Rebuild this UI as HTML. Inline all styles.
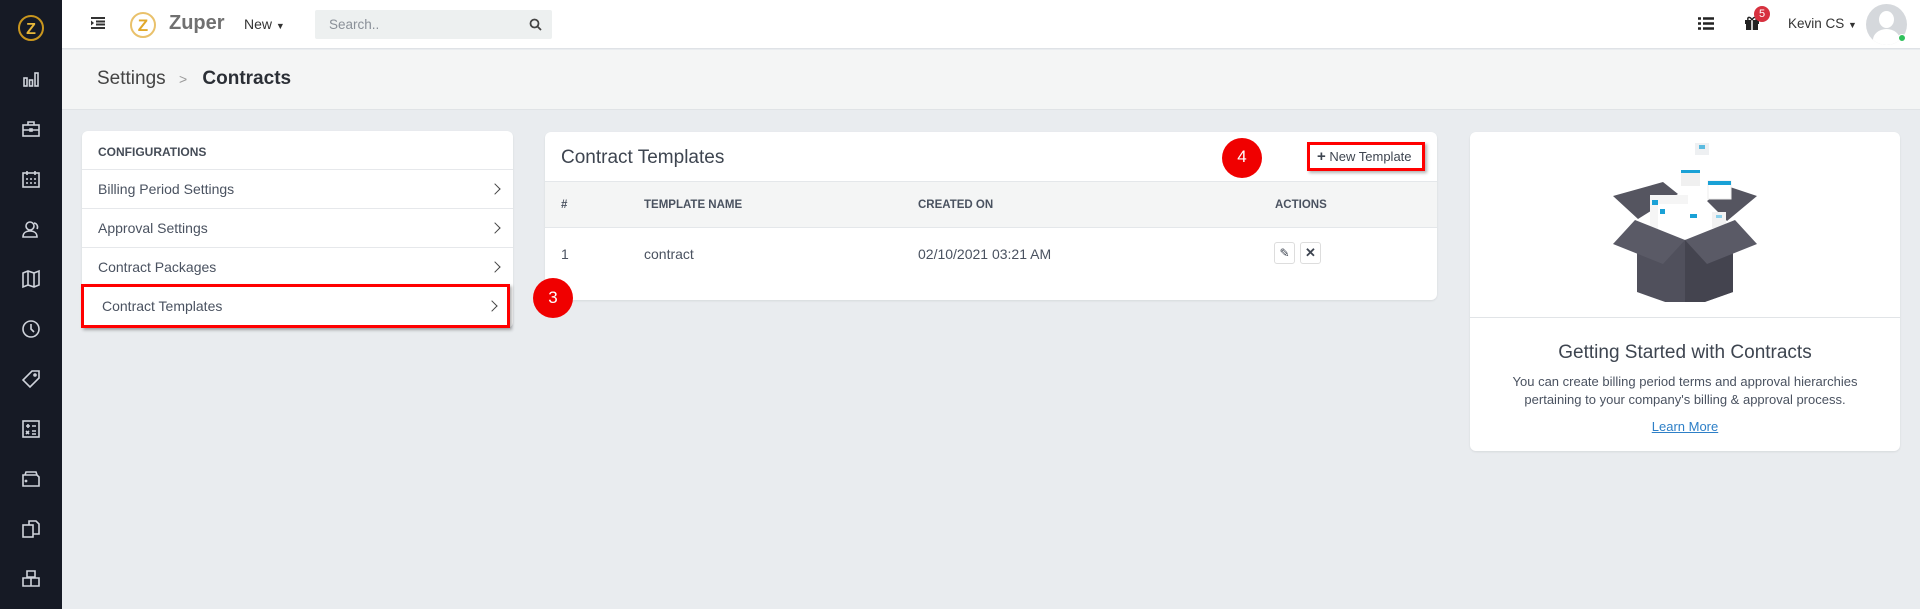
<!DOCTYPE html>
<html><head><meta charset="utf-8"><style>
*{box-sizing:border-box;margin:0;padding:0}
body{width:1920px;height:609px;overflow:hidden;background:#e9ecef;font-family:"Liberation Sans",sans-serif;color:#3d4450;position:relative}
.abs{position:absolute}
#side{left:0;top:0;width:62px;height:609px;background:#161a25}
#side svg{position:absolute;left:21px;width:20px;height:20px;fill:none;stroke:#cfd3db;stroke-width:1.6}
#top{left:62px;top:0;width:1858px;height:49px;background:#fff;border-bottom:1px solid #dfe2e6}
#crumb{left:62px;top:50px;width:1858px;height:60px;background:#f4f5f5;border-bottom:1px solid #e0e3e6}
.card{background:#fff;border-radius:6px;box-shadow:0 1px 2px rgba(0,0,0,.08)}
.row{position:absolute;left:0;width:100%;border-top:1px solid #e6e8eb;font-size:14px;color:#4a5260;padding-left:16px}
.chev{position:absolute;right:14px;top:50%;width:8px;height:8px;border-right:1.6px solid #444;border-top:1.6px solid #444;transform:translateY(-50%) rotate(45deg)}
.th{position:absolute;top:17px;font-size:11.5px;color:#4a5260;font-weight:bold}
.td{position:absolute;top:18px;font-size:14px;color:#4a5260}
.red{background:#f00000;border-radius:50%;color:#fff;font-size:17px;text-align:center}
</style></head><body>
<div id="side" class="abs">
 <svg style="top:13px;left:16px;width:30px;height:30px" viewBox="0 0 30 30"><circle cx="15" cy="15" r="12" stroke="#c9961e" stroke-width="2"/><text x="15" y="21" text-anchor="middle" font-family="Liberation Sans" font-weight="bold" font-size="16" fill="#e8b83a" stroke="none">Z</text></svg>
 <svg style="top:69px" viewBox="0 0 20 20"><rect x="3" y="9" width="3" height="8"/><rect x="8.5" y="11" width="3" height="6"/><rect x="14" y="4" width="3" height="13"/></svg>
 <svg style="top:119px" viewBox="0 0 20 20"><rect x="2" y="6" width="16" height="11"/><path d="M7 6V3h6v3M2 11h16"/><rect x="9" y="10" width="2" height="2"/></svg>
 <svg style="top:169px" viewBox="0 0 20 20"><rect x="2" y="4" width="16" height="14"/><path d="M6 2v4M14 2v4M5 10h2M9 10h2M13 10h2M5 14h2M9 14h2M13 14h2"/></svg>
 <svg style="top:219px" viewBox="0 0 20 20"><circle cx="9" cy="7" r="4"/><path d="M2 18c0-4 3-6 7-6s7 2 7 6zM13 4a4 4 0 0 1 3 6"/></svg>
 <svg style="top:269px" viewBox="0 0 20 20"><path d="M2 4l5-2 6 2 5-2v14l-5 2-6-2-5 2zM7 2v14M13 4v14"/></svg>
 <svg style="top:319px" viewBox="0 0 20 20"><circle cx="10" cy="10" r="8"/><path d="M10 5v5l3 3"/></svg>
 <svg style="top:369px" viewBox="0 0 20 20"><path d="M11 2h7v7l-9 9-7-7z"/><circle cx="14" cy="6" r="1"/></svg>
 <svg style="top:419px" viewBox="0 0 20 20"><rect x="2" y="2" width="16" height="16"/><path d="M5 7h4M7 5v4M11 7h4M5 12l3 3M8 12l-3 3M11 12h4M11 15h4"/></svg>
 <svg style="top:469px" viewBox="0 0 20 20"><path d="M2 6h14l2 2v9H2zM4 6l1-3h10l1 3"/><circle cx="5" cy="12" r=".6"/></svg>
 <svg style="top:519px" viewBox="0 0 20 20"><rect x="2" y="6" width="10" height="12"/><path d="M8 6V2h7l3 3v10h-6"/></svg>
 <svg style="top:569px" viewBox="0 0 20 20"><path d="M6 2h8v6H6zM2 9h8v8H2zM10 9h8v8h-8z"/></svg>
</div>
<div id="top" class="abs">
 <svg class="abs" style="left:29px;top:17px" width="14" height="12" viewBox="0 0 14 12"><path d="M0 1h14M5 4.5h9M5 7.5h9M0 11h14" stroke="#333" stroke-width="2"/><path d="M0 3.5l3 2.5-3 2.5z" fill="#333"/></svg>
 <svg class="abs" style="left:67px;top:10px" width="30" height="30" viewBox="0 0 30 30"><circle cx="14" cy="15" r="12" fill="none" stroke="#e9c16b" stroke-width="2"/><text x="14" y="21" text-anchor="middle" font-family="Liberation Sans" font-weight="bold" font-size="17" fill="#e1a82a">Z</text></svg>
 <div class="abs" style="left:107px;top:12px;font-size:20px;font-weight:bold;color:#707070">Zuper</div>
 <div class="abs" style="left:182px;top:16px;font-size:14px;color:#333">New <span style="font-size:9px">▼</span></div>
 <div class="abs" style="left:253px;top:10px;width:237px;height:29px;background:#edf0f0;border-radius:2px;font-size:13.5px;color:#8a9098;padding:7px 14px">Search..
  <svg class="abs" style="right:10px;top:8px" width="13" height="13" viewBox="0 0 13 13"><circle cx="5.5" cy="5.5" r="4" fill="none" stroke="#444" stroke-width="1.8"/><path d="M8.5 8.5l3.5 3.5" stroke="#444" stroke-width="1.8"/></svg></div>
 <svg class="abs" style="left:1636px;top:17px" width="16" height="13" viewBox="0 0 16 13"><path d="M0 1.5h3M5 1.5h11M0 6.5h3M5 6.5h11M0 11.5h3M5 11.5h11" stroke="#222" stroke-width="2.4"/></svg>
 <svg class="abs" style="left:1682px;top:15px" width="16" height="16" viewBox="0 0 16 16"><rect x="1" y="5" width="14" height="4" fill="#222"/><rect x="2" y="9" width="12" height="6" fill="#222"/><path d="M8 5v10" stroke="#fff" stroke-width="1.5"/><path d="M8 5c-2-4-5-3-4 0M8 5c2-4 5-3 4 0" stroke="#222" fill="none" stroke-width="1.5"/></svg>
 <div class="abs red" style="left:1692px;top:6px;width:16px;height:16px;background:#d7313f;font-size:11px;line-height:16px">5</div>
 <div class="abs" style="left:1726px;top:16px;font-size:13.5px;color:#333">Kevin CS <span style="font-size:9px">▼</span></div>
 <div class="abs" style="left:1804px;top:4px;width:41px;height:41px;border-radius:50%;background:#d5d8dc;overflow:hidden"><div class="abs" style="left:13px;top:7px;width:15px;height:17px;border-radius:50%;background:#fff"></div><div class="abs" style="left:7px;top:25px;width:27px;height:22px;border-radius:50%;background:#fff"></div></div>
 <div class="abs" style="left:1836px;top:34px;width:8px;height:8px;border-radius:50%;background:#2ec05a;border:1px solid #fff"></div>
</div>
<div id="crumb" class="abs"><div class="abs" style="left:35px;top:18px;font-size:19px;color:#444">Settings <span style="color:#999;font-size:14px;margin:0 10px 0 8px">&gt;</span> <b style="color:#2b2f36">Contracts</b></div></div>

<div class="abs card" style="left:82px;top:131px;width:431px;height:197px">
 <div class="abs" style="left:16px;top:14px;font-size:12px;font-weight:bold;color:#454c57">CONFIGURATIONS</div>
 <div class="row" style="top:38px;height:39px;line-height:39px">Billing Period Settings<span class="chev"></span></div>
 <div class="row" style="top:77px;height:39px;line-height:39px">Approval Settings<span class="chev"></span></div>
 <div class="row" style="top:116px;height:39px;line-height:39px">Contract Packages<span class="chev"></span></div>
</div>
<div class="abs" style="left:81px;top:284px;width:429px;height:44px;border:3px solid #f00;background:#fff;box-shadow:2px 2px 3px rgba(0,0,0,.3);font-size:14px;color:#4a5260;line-height:38px;padding-left:18px">Contract Templates<span class="chev" style="right:11px"></span></div>

<div class="abs card" style="left:545px;top:132px;width:892px;height:168px;overflow:hidden">
 <div class="abs" style="left:16px;top:15px;font-size:19px;color:#3e4550">Contract Templates</div>
 <div class="abs" style="left:0;top:49px;width:100%;height:47px;background:#f4f5f5;border-top:1px solid #e4e7ea;border-bottom:1px solid #e4e7ea">
  <div class="th" style="left:16px">#</div><div class="th" style="left:99px">TEMPLATE NAME</div><div class="th" style="left:373px">CREATED ON</div><div class="th" style="left:730px">ACTIONS</div>
 </div>
 <div class="abs" style="left:0;top:96px;width:100%;height:52px">
  <div class="td" style="left:16px">1</div><div class="td" style="left:99px">contract</div><div class="td" style="left:373px">02/10/2021 03:21 AM</div>
  <div class="abs" style="left:729px;top:14px;width:21px;height:22px;border:1px solid #ddd;border-radius:3px;text-align:center;font-size:12px;line-height:20px">✎</div>
  <div class="abs" style="left:755px;top:14px;width:21px;height:22px;border:1px solid #ddd;border-radius:3px;text-align:center;font-size:13px;line-height:20px;font-weight:bold">✕</div>
 </div>
</div>
<div class="abs red" style="left:533px;top:278px;width:40px;height:40px;line-height:40px">3</div>
<div class="abs red" style="left:1222px;top:138px;width:40px;height:40px;line-height:38px">4</div>
<div class="abs" style="left:1307px;top:142px;width:118px;height:29px;border:3px solid #f00;background:#fff;box-shadow:2px 2px 3px rgba(0,0,0,.3);font-size:13px;color:#3e4550;line-height:23px;padding-left:7px"><b style="font-size:15px">+</b> New Template</div>

<div class="abs card" style="left:1470px;top:132px;width:430px;height:319px">
 <svg class="abs" style="left:140px;top:10px" width="150" height="160" viewBox="0 0 150 160">
  <rect x="85" y="1" width="14" height="12" fill="#eef0f2"/><rect x="89" y="3" width="6" height="4" fill="#5bbbe0"/>
  <path d="M3 54l50-14 15 12-40 25zM147 54l-30-10-20 15 20 20z" fill="#555560"/>
  <rect x="71" y="28" width="19" height="16" fill="#f0f0f0"/><rect x="71" y="28" width="19" height="3" fill="#1aa1d6"/>
  <rect x="98" y="39" width="23" height="18" fill="#fff" stroke="#eee"/><rect x="98" y="39" width="23" height="4" fill="#1aa1d6"/>
  <rect x="40" y="53" width="38" height="40" fill="#f5f5f5"/><rect x="42" y="58" width="6" height="5" fill="#1aa1d6"/>
  <rect x="48" y="62" width="40" height="40" fill="#fff"/><rect x="50" y="67" width="5" height="5" fill="#1aa1d6"/>
  <rect x="70" y="66" width="30" height="35" fill="#fff"/><rect x="80" y="72" width="7" height="4" fill="#1aa1d6"/>
  <rect x="102" y="70" width="14" height="16" fill="#f2f2f2"/><rect x="106" y="73" width="6" height="3" fill="#8cd0ea"/>
  <path d="M27 90l48 8 48-8v60l-48 17-48-17z" fill="#50505c"/>
  <path d="M75 98v69l48-17v-60z" fill="#44444f"/><path d="M3 102l22-24 50 20-22 24zM147 102l-22-24-50 20 22 24z" fill="#5a5a66"/>
 </svg>
 <div class="abs" style="left:0;top:185px;width:100%;border-top:1px solid #e1e4e7"></div>
 <div class="abs" style="left:0;top:210px;width:100%;text-align:center;font-size:19px;color:#3e4550">Getting Started with Contracts</div>
 <div class="abs" style="left:0;top:241px;width:100%;text-align:center;font-size:13px;color:#4a5260;line-height:18px">You can create billing period terms and approval hierarchies<br>pertaining to your company's billing &amp; approval process.</div>
 <div class="abs" style="left:0;top:287px;width:100%;text-align:center;font-size:13px;color:#2d7fc7;text-decoration:underline">Learn More</div>
</div>
</body></html>
